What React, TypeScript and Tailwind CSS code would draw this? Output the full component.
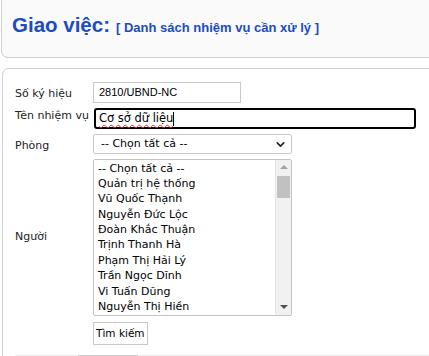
import { ChevronDown } from 'lucide-react';

const people = [
  '-- Chọn tất cả --',
  'Quản trị hệ thống',
  'Vũ Quốc Thạnh',
  'Nguyễn Đức Lộc',
  'Đoàn Khắc Thuận',
  'Trịnh Thanh Hà',
  'Phạm Thị Hải Lý',
  'Trần Ngọc Dĩnh',
  'Vi Tuấn Dũng',
  'Nguyễn Thị Hiền',
];

const sans = "font-['DejaVu_Sans',Verdana,sans-serif]";
const arial = "font-['Liberation_Sans',Arial,sans-serif]";

function Label({ children, className = '' }: { children: React.ReactNode; className?: string }) {
  return <div className={`text-[11px] text-[#222] ${className}`}>{children}</div>;
}

export default function App() {
  return (
    <div className={`w-[429px] h-[356px] overflow-hidden bg-white ${sans}`}>
      <div className="ml-px w-[440px] h-[58px] border border-t-0 border-[#cfcfcf] rounded-bl-[7px] bg-[#fafafa] pl-[10px] pt-[10px]">
        <h1 className={`${arial} font-bold text-[#1c4cbf] flex items-baseline gap-[6px]`}>
          <span className="text-[20.5px]">Giao việc:</span>
          <span className="text-[13px]">[ Danh sách nhiệm vụ cần xử lý ]</span>
        </h1>
      </div>

      <div className="mt-[10px] ml-[2px] w-[440px] border border-[#cfcfcf] rounded-tl-[7px] pt-[13px] pl-[12px] pb-4">
        <div className="grid grid-cols-[78px_1fr] items-center">
          <Label className="mt-[3px]">Số ký hiệu</Label>
          <div className={`w-[148px] h-[21px] border border-[#c9c9c9] flex items-center pl-[5px] text-[11px] text-black ${arial}`}>
            2810/UBND-NC
          </div>

          <Label className="self-start mt-[5px]">Tên nhiệm vụ</Label>
          <div className="mt-[5px] ml-px w-[322px] h-[21px] border-2 border-black rounded-[3px] flex items-center pl-[3px] text-[11.5px] text-black">
            <span className="underline decoration-wavy decoration-[#e03030] decoration-1 underline-offset-2">Cơ sở dữ liệu</span>
            <span className="w-px h-[14px] bg-black" />
          </div>

          <Label className="mt-[9px]">Phòng</Label>
          <div className="mt-[5px] w-[199px] h-[20px] border border-[#c9c9c9] rounded-[2px] flex items-center justify-between pl-[7px] pr-[4px] text-[11px] text-black">
            <span>-- Chọn tất cả --</span>
            <ChevronDown size={13} strokeWidth={3} className="text-[#222]" />
          </div>

          <Label className="mt-[5px]">Người</Label>
          <div className="mt-[4px] w-[199px] h-[157px] border border-[#c4c4c4] rounded-[2px] flex overflow-hidden">
            <div className="flex-1 pt-px pl-[4px] text-[11px] text-black">
              {people.map(p => (
                <div key={p} className="h-[15.4px] leading-[15.4px] whitespace-nowrap">{p}</div>
              ))}
            </div>
            <div className="w-[16px] bg-[#f1f1f1] border-l border-[#e6e6e6] flex flex-col items-center">
              <div className="mt-[5px] w-0 h-0 border-l-[4px] border-r-[4px] border-b-[4px] border-l-transparent border-r-transparent border-b-[#a3a3a3]" />
              <div className="mt-[7px] w-[13px] h-[22px] bg-[#c1c1c1]" />
              <div className="flex-1" />
              <div className="mb-[6px] w-0 h-0 border-l-[4px] border-r-[4px] border-t-[4px] border-l-transparent border-r-transparent border-t-[#505050]" />
            </div>
          </div>

          <div />
          <div className="mt-[4px]">
            <button className="h-[23px] px-[2px] border border-[#c9c9c9] bg-white text-[10.5px] text-black">Tìm kiếm</button>
          </div>
        </div>

        <div className="mt-[10px] h-[30px] bg-[#eeeeee] flex items-start pl-[14px] pt-[4px]">
          <span className="text-[11px] leading-[14px] text-[#222] w-[49px]">Số bản</span>
          <div className="-mt-[4px] w-[60px] h-[22px] bg-white border border-[#c9c9c9]" />
        </div>
      </div>
    </div>
  );
}
